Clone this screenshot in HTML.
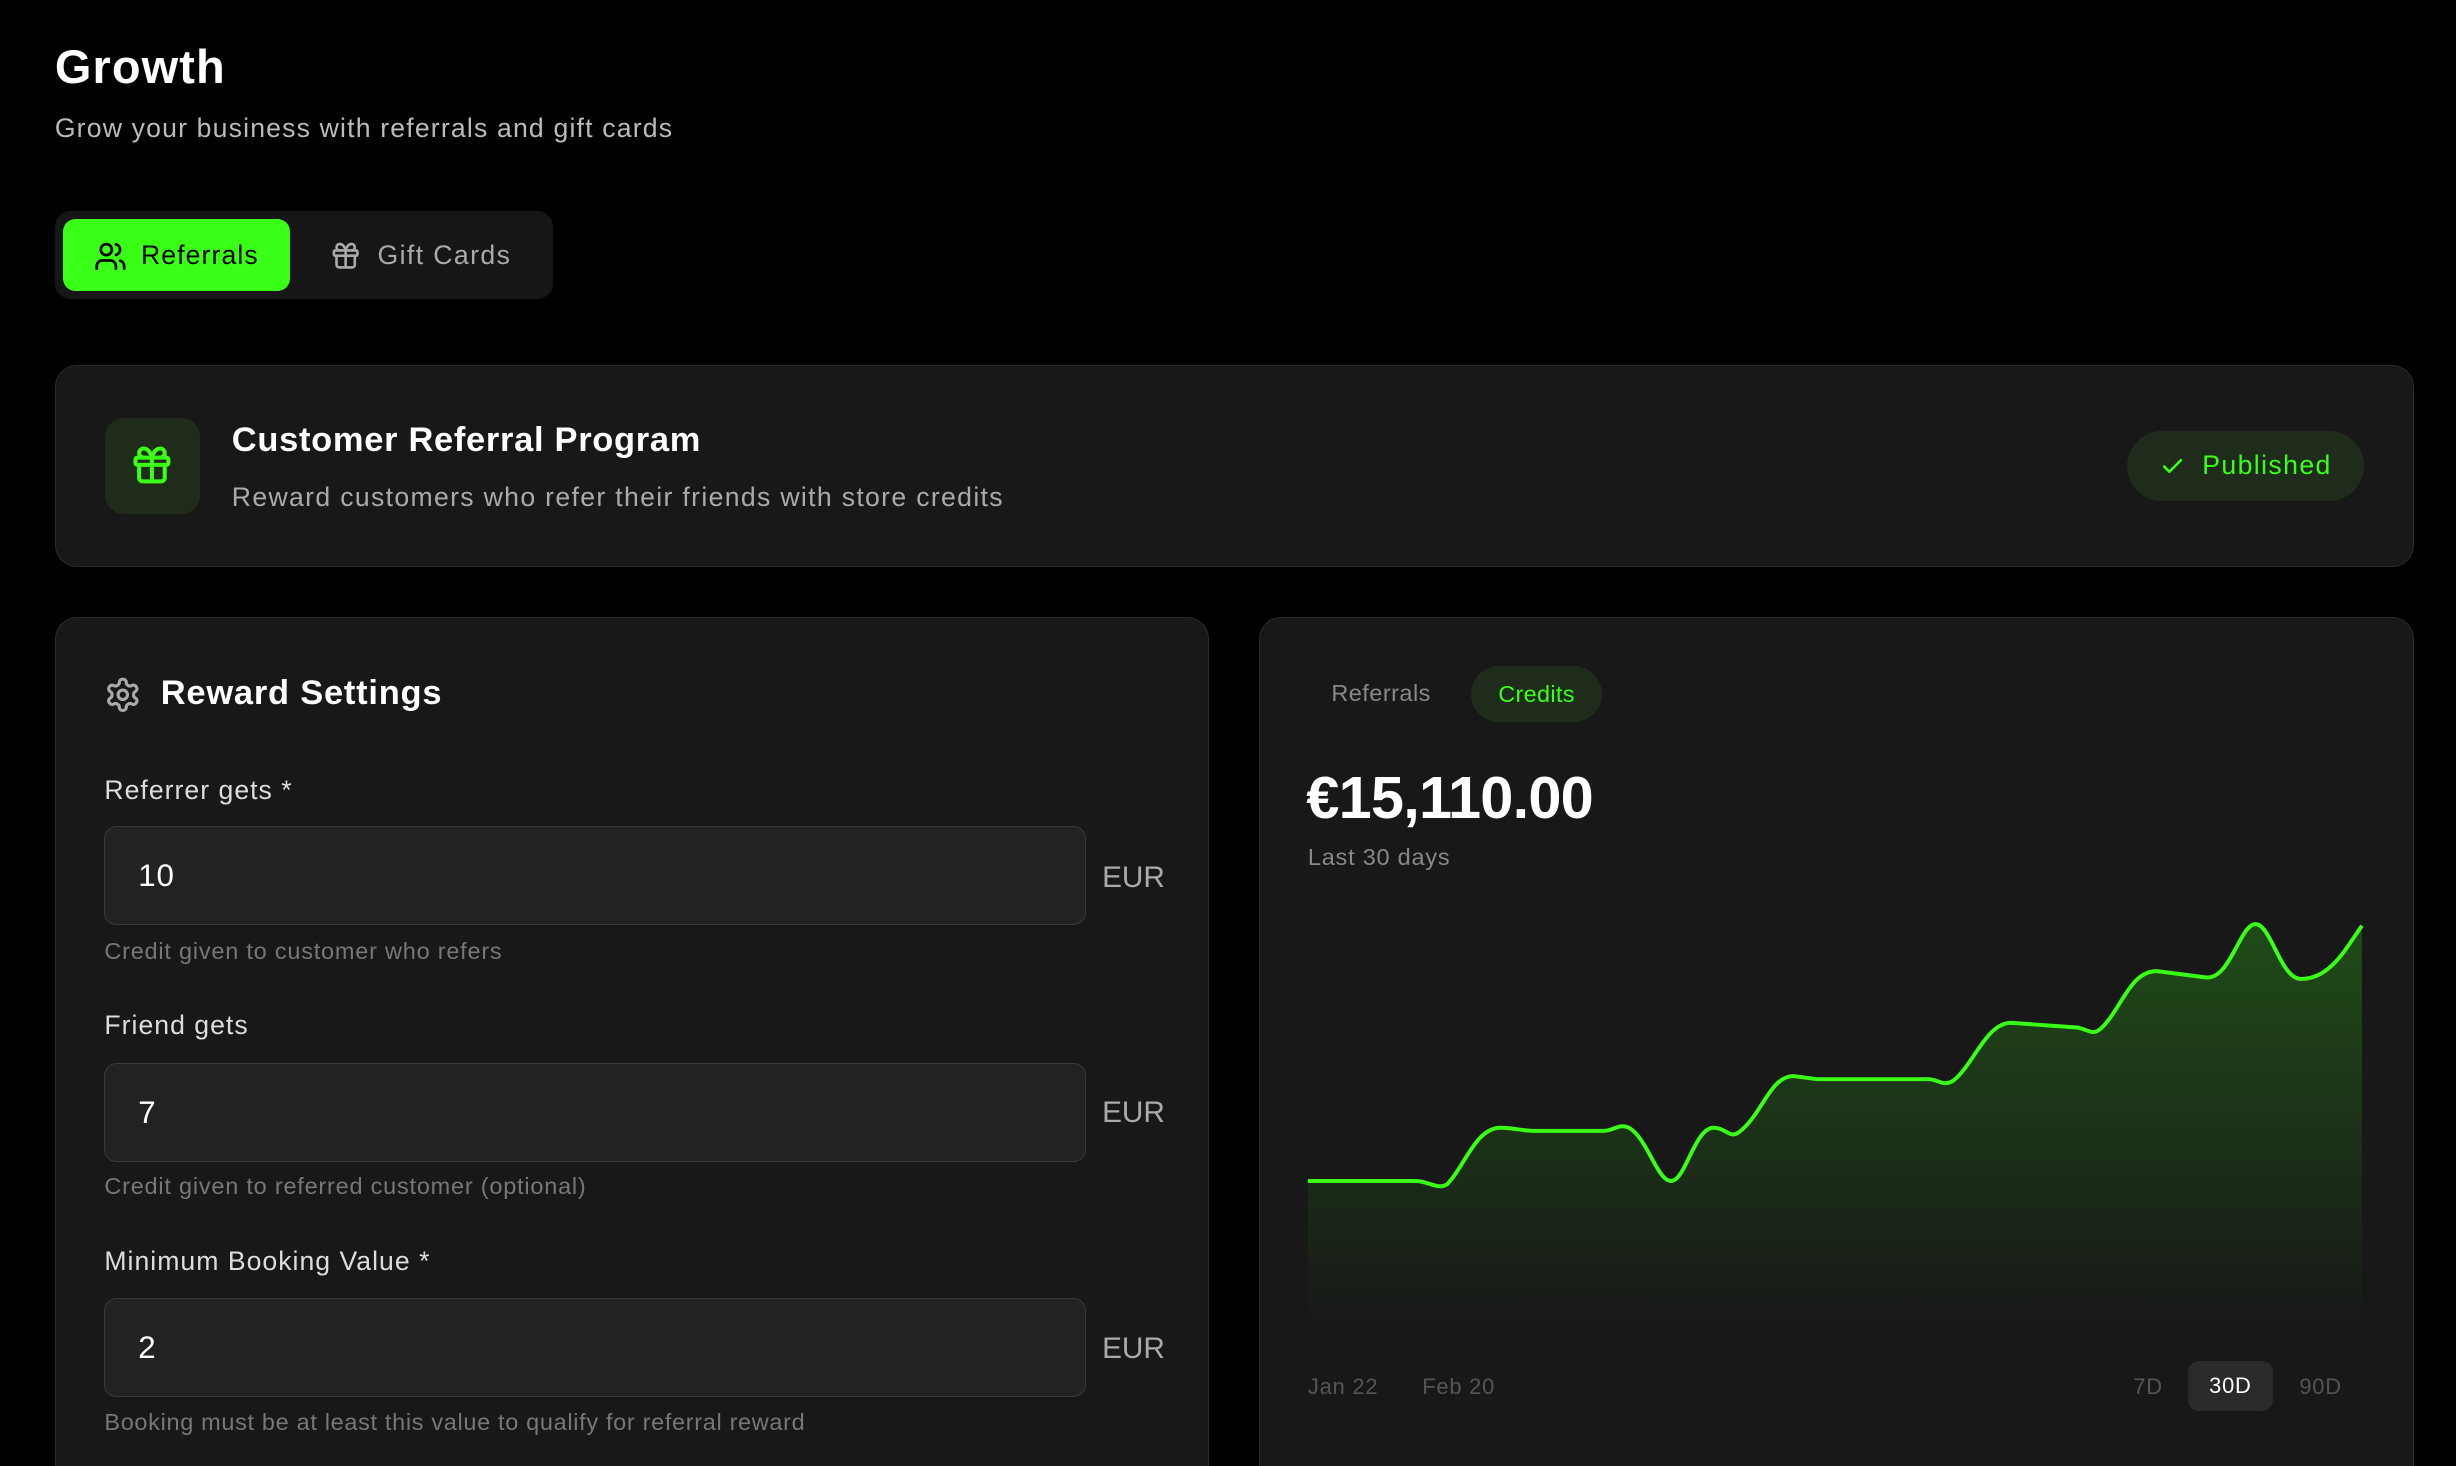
<!DOCTYPE html>
<html><head><meta charset="utf-8"><style>
*{box-sizing:border-box;margin:0;padding:0}
html,body{background:#000;width:2456px;height:1466px;overflow:hidden}
body{font-family:"Liberation Sans",sans-serif}
#r{zoom:1.5663;position:relative;width:1568px;height:936px;overflow:hidden;letter-spacing:0.5px}
.a{position:absolute;white-space:nowrap}
.card{position:absolute;background:#181818;border:1px solid #2a2a2a;border-radius:14px}
.inp{position:absolute;left:31px;width:627px;height:63px;background:#212221;border:1px solid #3a3a3a;border-radius:8px;color:#fff;font-size:20px;line-height:63px;padding-left:21px}
.lbl{position:absolute;left:31px;font-size:17px;color:#ddd;letter-spacing:0.65px}
.hlp{position:absolute;left:31px;font-size:15px;color:#777;letter-spacing:0.5px}
.eur{position:absolute;left:668px;font-size:19px;color:#aaa;letter-spacing:0}
svg.i{fill:none;stroke-linecap:round;stroke-linejoin:round}
</style></head><body><div id="r">
<div class="a" style="left:35px;top:25px;font-size:30px;font-weight:bold;color:#fff;letter-spacing:0.7px">Growth</div>
<div class="a" style="left:35px;top:72px;font-size:17px;color:#bbb;letter-spacing:0.75px">Grow your business with referrals and gift cards</div>

<div class="a" style="left:35px;top:135px;width:318px;height:56px;background:#161616;border-radius:10px"></div>
<div class="a" style="left:40px;top:140px;width:145px;height:46px;background:#3aff16;border-radius:8px"></div>
<svg class="i a" style="left:60px;top:153px" width="21" height="21" viewBox="0 0 24 24" stroke="#000" stroke-width="2"><path d="M16 21v-2a4 4 0 0 0-4-4H6a4 4 0 0 0-4 4v2"/><circle cx="9" cy="7" r="4"/><path d="M22 21v-2a4 4 0 0 0-3-3.87M16 3.13a4 4 0 0 1 0 7.75"/></svg>
<div class="a" style="left:90px;top:153px;font-size:17px;color:#000;letter-spacing:0.7px">Referrals</div>
<svg class="i a" style="left:211px;top:153px" width="20" height="20" viewBox="0 0 24 24" stroke="#aaa" stroke-width="2"><rect x="3" y="8" width="18" height="4" rx="1"/><path d="M12 8v13M19 12v7a2 2 0 0 1-2 2H7a2 2 0 0 1-2-2v-7M7.5 8a2.5 2.5 0 0 1 0-5A4.8 8 0 0 1 12 8a4.8 8 0 0 1 4.5-5 2.5 2.5 0 0 1 0 5"/></svg>
<div class="a" style="left:241px;top:153px;font-size:17px;color:#aaa;letter-spacing:0.9px">Gift Cards</div>

<div class="card" style="left:35px;top:233px;width:1506px;height:129px"></div>
<div class="a" style="left:67px;top:267px;width:61px;height:61px;background:#1f2c1b;border-radius:12px"></div>
<svg class="i a" style="left:83px;top:283px" width="28" height="28" viewBox="0 0 24 24" stroke="#3aff16" stroke-width="2.2"><rect x="3" y="8" width="18" height="4" rx="1"/><path d="M12 8v13M19 12v7a2 2 0 0 1-2 2H7a2 2 0 0 1-2-2v-7M7.5 8a2.5 2.5 0 0 1 0-5A4.8 8 0 0 1 12 8a4.8 8 0 0 1 4.5-5 2.5 2.5 0 0 1 0 5"/></svg>
<div class="a" style="left:148px;top:269px;font-size:22px;font-weight:bold;color:#fff;letter-spacing:0.45px">Customer Referral Program</div>
<div class="a" style="left:148px;top:308px;font-size:17px;color:#aaa;letter-spacing:0.85px">Reward customers who refer their friends with store credits</div>
<div class="a" style="left:1358px;top:275px;width:151px;height:45px;background:#1f2c1b;border-radius:23px"></div>
<svg class="i a" style="left:1379px;top:290px" width="16" height="16" viewBox="0 0 24 24" stroke="#3aff16" stroke-width="2.5"><path d="M20 6 9 17l-5-5"/></svg>
<div class="a" style="left:1406px;top:287px;font-size:17px;color:#3aff16;letter-spacing:0.9px">Published</div>

<div class="card" style="left:35px;top:394px;width:737px;height:560px">
<svg class="i a" style="left:31px;top:37px" width="24" height="24" viewBox="0 0 24 24" stroke="#aaa" stroke-width="2"><path d="M12.22 2h-.44a2 2 0 0 0-2 2v.18a2 2 0 0 1-1 1.730l-.43.25a2 2 0 0 1-2 0l-.15-.08a2 2 0 0 0-2.730.730l-.22.38a2 2 0 0 0 .730 2.730l.15.1a2 2 0 0 1 1 1.72v.51a2 2 0 0 1-1 1.74l-.15.09a2 2 0 0 0-.73 2.73l.22.38a2 2 0 0 0 2.73.73l.15-.08a2 2 0 0 1 2 0l.43.25a2 2 0 0 1 1 1.73V20a2 2 0 0 0 2 2h.44a2 2 0 0 0 2-2v-.18a2 2 0 0 1 1-1.73l.43-.25a2 2 0 0 1 2 0l.15.08a2 2 0 0 0 2.73-.73l.22-.39a2 2 0 0 0-.73-2.73l-.15-.08a2 2 0 0 1-1-1.74v-.5a2 2 0 0 1 1-1.74l.15-.09a2 2 0 0 0 .73-2.73l-.22-.38a2 2 0 0 0-2.73-.73l-.15.08a2 2 0 0 1-2 0l-.43-.25a2 2 0 0 1-1-1.73V4a2 2 0 0 0-2-2z"/><circle cx="12" cy="12" r="3"/></svg>
<div class="a" style="left:67px;top:36px;font-size:22px;font-weight:bold;color:#fff;letter-spacing:0.5px">Reward Settings</div>
<div class="lbl" style="top:100px">Referrer gets *</div>
<div class="inp" style="top:133px">10</div><div class="eur" style="top:155px">EUR</div>
<div class="hlp" style="top:204px">Credit given to customer who refers</div>
<div class="lbl" style="top:250px">Friend gets</div>
<div class="inp" style="top:284px">7</div><div class="eur" style="top:305px">EUR</div>
<div class="hlp" style="top:354px">Credit given to referred customer (optional)</div>
<div class="lbl" style="top:401px">Minimum Booking Value *</div>
<div class="inp" style="top:434px">2</div><div class="eur" style="top:456px">EUR</div>
<div class="hlp" style="top:505px;letter-spacing:0.43px">Booking must be at least this value to qualify for referral reward</div>
</div>

<div class="card" style="left:804px;top:394px;width:737px;height:560px"></div>
<div class="a" style="left:850px;top:434px;font-size:15px;color:#888;letter-spacing:0.3px">Referrals</div>
<div class="a" style="left:939px;top:425px;width:84px;height:36px;background:#1f2c1b;border-radius:18px;color:#3aff16;font-size:15px;line-height:36px;text-align:center;letter-spacing:0.2px">Credits</div>
<div class="a" style="left:834px;top:487px;font-size:38px;font-weight:bold;color:#fff;letter-spacing:-0.5px">€15,110.00</div>
<div class="a" style="left:835px;top:539px;font-size:15px;color:#888">Last 30 days</div>
<svg class="a" style="left:0;top:0" width="1568" height="936">
<defs><linearGradient id="g" x1="0" y1="0" x2="0" y2="1"><stop offset="0" stop-color="#3aff16" stop-opacity=".22"/><stop offset="1" stop-color="#3aff16" stop-opacity="0"/></linearGradient></defs>
<path d="M835 754 L904 754 C912 754 918 760 924 756 C935 745 942 720 958 720 C966 720 972 722 980 722 L1024 722 C1030 722 1034 717 1040 720 C1052 727 1058 754 1067 754 C1076 754 1082 720 1094 720 C1102 720 1104 727 1110 723 C1125 712 1130 687 1145 687 L1160 689 L1231 689 C1238 689 1240 694 1247 690 C1260 680 1268 653 1284 653 L1326 656 C1333 657 1336 662 1342 656 C1355 643 1360 620 1377 620 L1408 624 C1424 626 1430 590 1440 590 C1450 590 1456 625 1469 625 C1488 625 1498 605 1508 591 L1508 850 L835 850 Z" fill="url(#g)"/>
<path d="M835 754 L904 754 C912 754 918 760 924 756 C935 745 942 720 958 720 C966 720 972 722 980 722 L1024 722 C1030 722 1034 717 1040 720 C1052 727 1058 754 1067 754 C1076 754 1082 720 1094 720 C1102 720 1104 727 1110 723 C1125 712 1130 687 1145 687 L1160 689 L1231 689 C1238 689 1240 694 1247 690 C1260 680 1268 653 1284 653 L1326 656 C1333 657 1336 662 1342 656 C1355 643 1360 620 1377 620 L1408 624 C1424 626 1430 590 1440 590 C1450 590 1456 625 1469 625 C1488 625 1498 605 1508 591" fill="none" stroke="#3aff16" stroke-width="2.5"/>
</svg>
<div class="a" style="left:835px;top:877px;font-size:14px;color:#555">Jan 22</div>
<div class="a" style="left:908px;top:877px;font-size:14px;color:#555">Feb 20</div>
<div class="a" style="left:1362px;top:877px;font-size:14px;color:#555">7D</div>
<div class="a" style="left:1397px;top:869px;width:54px;height:32px;background:#2a2a2a;border-radius:7px;color:#fff;font-size:14px;line-height:32px;text-align:center">30D</div>
<div class="a" style="left:1468px;top:877px;font-size:14px;color:#555">90D</div>
</div></body></html>
